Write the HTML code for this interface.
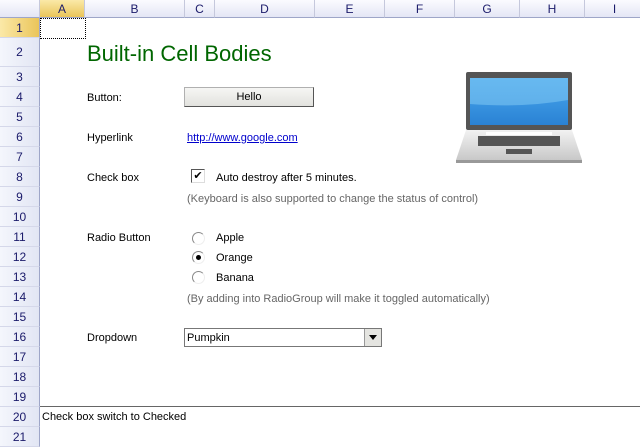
<!DOCTYPE html><html><head><style>
body{margin:0;width:640px;height:443px;overflow:hidden;background:#fff;font-family:"Liberation Sans",sans-serif;font-size:11px;position:relative}
.a{position:absolute}
.ch{top:0;height:18px;background:linear-gradient(#fbfbff,#e4e6f5);border-right:1px solid #c5c8dc;border-bottom:1px solid #9ea6c8;box-sizing:border-box;text-align:center;line-height:18px;color:#1a1a6a;font-size:12px}
.rh{left:0;width:40px;background:linear-gradient(90deg,#f4f6fc,#e2e6f4);border-bottom:1px solid #d5d8ea;border-right:1px solid #9ea6c8;box-sizing:border-box;text-align:center;color:#1a1a6a;font-size:12px}
.t{color:#000}
.g{color:#666}
</style></head><body>
<div class="a ch" style="left:0;width:40px"></div>
<div class="a ch" style="left:40px;width:45px;background:linear-gradient(#fbe9a8,#eac55a)">A</div>
<div class="a ch" style="left:85px;width:100px">B</div>
<div class="a ch" style="left:185px;width:30px">C</div>
<div class="a ch" style="left:215px;width:100px">D</div>
<div class="a ch" style="left:315px;width:70px">E</div>
<div class="a ch" style="left:385px;width:70px">F</div>
<div class="a ch" style="left:455px;width:65px">G</div>
<div class="a ch" style="left:520px;width:65px">H</div>
<div class="a ch" style="left:585px;width:60px">I</div>
<div class="a rh" style="top:18px;height:20px;line-height:20px;background:linear-gradient(90deg,#fbe9a8,#eac55a)">1</div>
<div class="a rh" style="top:38px;height:29px;line-height:29px">2</div>
<div id="rows"></div>
<script>
var h='';for(var n=3;n<=21;n++){var t=67+(n-3)*20;h+='<div class="a rh" style="top:'+t+'px;height:20px;line-height:20px">'+n+'</div>';}
document.getElementById('rows').outerHTML=h;
</script>
<div class="a" style="left:40px;top:18px;width:44px;height:19px;border:1px dotted #000"></div>
<div class="a" style="left:87px;top:41px;font-size:22px;color:#006600">Built-in Cell Bodies</div>
<div class="a t" style="left:87px;top:92px">Button:</div>
<div class="a" style="left:184px;top:87px;width:128px;height:18px;background:linear-gradient(#f6f6f4,#e2e2de);border:1px solid #b0b0b0;border-right-color:#555;border-bottom-color:#555;text-align:center;line-height:19px">Hello</div>
<div class="a t" style="left:87px;top:132px">Hyperlink</div>
<div class="a" style="left:187px;top:132px;color:#0000cc;text-decoration:underline">http://www.google.com</div>
<div class="a t" style="left:87px;top:172px">Check box</div>
<div class="a" style="left:191px;top:169px;width:12px;height:12px;border:1px solid #555;border-right-color:#ddd;border-bottom-color:#ddd;font-size:11px;line-height:12px;text-align:center">✔</div>
<div class="a t" style="left:216px;top:172px">Auto destroy after 5 minutes.</div>
<div class="a g" style="left:187px;top:193px">(Keyboard is also supported to change the status of control)</div>
<div class="a t" style="left:87px;top:232px">Radio Button</div>
<div class="a" style="left:192px;top:232px;width:11px;height:11px;border-radius:50%;border:1px solid #888;border-right-color:#eee;border-bottom-color:#eee"></div>
<div class="a t" style="left:216px;top:232px">Apple</div>
<div class="a" style="left:192px;top:251px;width:11px;height:11px;border-radius:50%;border:1px solid #888;border-right-color:#eee;border-bottom-color:#eee"><div class="a" style="left:3px;top:3px;width:5px;height:5px;border-radius:50%;background:#000"></div></div>
<div class="a t" style="left:216px;top:252px">Orange</div>
<div class="a" style="left:192px;top:271px;width:11px;height:11px;border-radius:50%;border:1px solid #888;border-right-color:#eee;border-bottom-color:#eee"></div>
<div class="a t" style="left:216px;top:272px">Banana</div>
<div class="a g" style="left:187px;top:293px">(By adding into RadioGroup will make it toggled automatically)</div>
<div class="a t" style="left:87px;top:332px">Dropdown</div>
<div class="a" style="left:184px;top:328px;width:198px;height:19px;border:1px solid #777;box-sizing:border-box;line-height:18px;padding-left:2px">Pumpkin</div>
<div class="a" style="left:364px;top:329px;width:17px;height:17px;background:#e4e4e0;border-left:1px solid #999;box-sizing:border-box"><div class="a" style="left:4px;top:6px;border-left:4px solid transparent;border-right:4px solid transparent;border-top:5px solid #000"></div></div>
<div class="a" style="left:40px;top:406px;width:600px;border-top:1px solid #666"></div>
<div class="a t" style="left:42px;top:411px">Check box switch to Checked</div>
<svg class="a" style="left:454px;top:70px" width="130" height="96" viewBox="0 0 130 96">
<defs><linearGradient id="s" x1="0" y1="0" x2="0" y2="1"><stop offset="0" stop-color="#f2f2f2"/><stop offset="1" stop-color="#c8c8c8"/></linearGradient>
<linearGradient id="sc" x1="0" y1="0" x2="0" y2="1"><stop offset="0" stop-color="#4aa8ee"/><stop offset="1" stop-color="#2a82d4"/></linearGradient></defs>
<rect x="12" y="2" width="106" height="58" rx="2" fill="#555"/>
<rect x="16" y="8" width="98" height="47" fill="url(#sc)"/>
<path d="M16 8 H114 V30 Q70 38 16 34 Z" fill="#7cc4f2" opacity=".6"/>
<path d="M12 60 L118 60 L128 90 L2 90 Z" fill="url(#s)"/>
<rect x="2" y="90" width="126" height="3" fill="#999"/>
<rect x="32" y="62" width="66" height="3" fill="#fff"/>
<rect x="24" y="66" width="82" height="10" fill="#555"/>
<rect x="52" y="79" width="26" height="5" fill="#555"/>
</svg>
</body></html>
